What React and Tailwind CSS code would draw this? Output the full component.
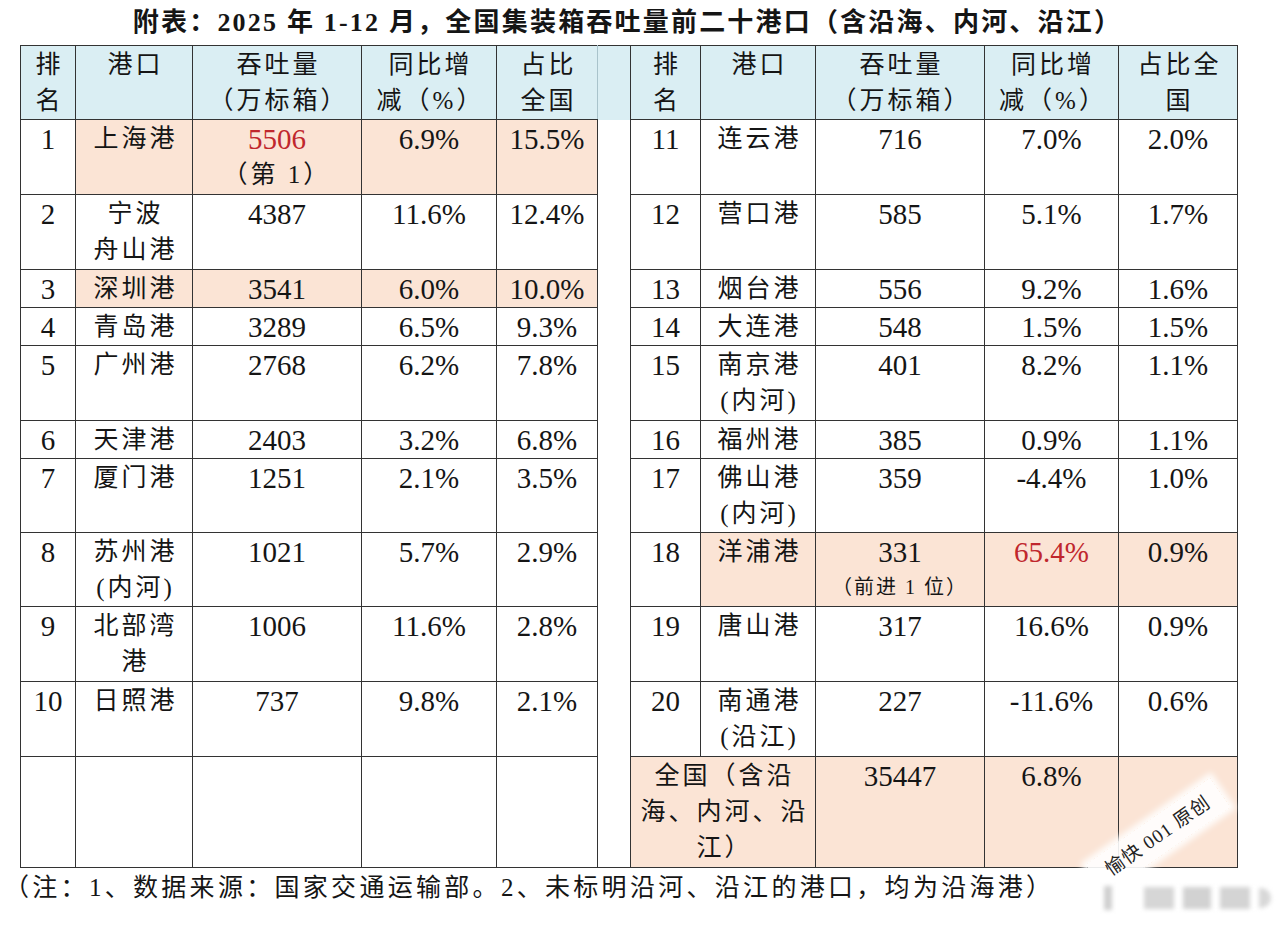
import React from "react";

// 左右两半表格的数据
const leftRows = [
  { r: "1", p: ["上海港"], v: "5506", sub: "（第 1）", y: "6.9%", s: "15.5%", hl: true, redV: true, h: "h-[75px]" },
  { r: "2", p: ["宁波", "舟山港"], v: "4387", y: "11.6%", s: "12.4%", h: "h-[75px]" },
  { r: "3", p: ["深圳港"], v: "3541", y: "6.0%", s: "10.0%", hl: true, h: "h-[38px]" },
  { r: "4", p: ["青岛港"], v: "3289", y: "6.5%", s: "9.3%", h: "h-[38px]" },
  { r: "5", p: ["广州港"], v: "2768", y: "6.2%", s: "7.8%", h: "h-[75px]" },
  { r: "6", p: ["天津港"], v: "2403", y: "3.2%", s: "6.8%", h: "h-[38px]" },
  { r: "7", p: ["厦门港"], v: "1251", y: "2.1%", s: "3.5%", h: "h-[74px]" },
  { r: "8", p: ["苏州港", "(内河)"], v: "1021", y: "5.7%", s: "2.9%", h: "h-[74px]" },
  { r: "9", p: ["北部湾", "港"], v: "1006", y: "11.6%", s: "2.8%", h: "h-[75px]" },
  { r: "10", p: ["日照港"], v: "737", y: "9.8%", s: "2.1%", h: "h-[75px]" },
];

const rightRows = [
  { r: "11", p: ["连云港"], v: "716", y: "7.0%", s: "2.0%" },
  { r: "12", p: ["营口港"], v: "585", y: "5.1%", s: "1.7%" },
  { r: "13", p: ["烟台港"], v: "556", y: "9.2%", s: "1.6%" },
  { r: "14", p: ["大连港"], v: "548", y: "1.5%", s: "1.5%" },
  { r: "15", p: ["南京港", "(内河)"], v: "401", y: "8.2%", s: "1.1%" },
  { r: "16", p: ["福州港"], v: "385", y: "0.9%", s: "1.1%" },
  { r: "17", p: ["佛山港", "(内河)"], v: "359", y: "-4.4%", s: "1.0%" },
  { r: "18", p: ["洋浦港"], v: "331", small: "（前进 1 位）", y: "65.4%", s: "0.9%", hl: true, redY: true },
  { r: "19", p: ["唐山港"], v: "317", y: "16.6%", s: "0.9%" },
  { r: "20", p: ["南通港", "(沿江)"], v: "227", y: "-11.6%", s: "0.6%" },
];

const B = "border border-[#333]";
const HL = "bg-[#fbe4d5]";
const HEAD = "bg-[#daeef3]";
const NUM = "text-[29px]";

function Cell({ children, hl, className = "", colSpan }) {
  return (
    <td colSpan={colSpan} className={`${B} align-top text-center p-0 pt-[1px] ${hl ? HL : ""} ${className}`}>
      {children}
    </td>
  );
}

function Lines({ lines }) {
  return (
    <div className="tracking-[3px] pl-[3px]">
      {lines.map((l, i) => (
        <div key={i}>{l}</div>
      ))}
    </div>
  );
}

function HeadRow() {
  const cjk = "tracking-[3px] pl-[3px] pt-[1px]";
  return (
    <tr className="h-[73px]">
      <td className={`${B} ${HEAD} align-top text-center p-0 ${cjk}`}>排<br />名</td>
      <td className={`${B} ${HEAD} align-top text-center p-0 ${cjk}`}>港口</td>
      <td className={`${B} ${HEAD} align-top text-center p-0 ${cjk}`}>吞吐量<br />（万标箱）</td>
      <td className={`${B} ${HEAD} align-top text-center p-0 ${cjk}`}>同比增<br />减（%）</td>
      <td className={`${B} border-r-[#a9c3cb] ${HEAD} align-top text-center p-0 ${cjk}`}>占比<br />全国</td>
      <td className={`border-t border-r border-[#333] ${HEAD} p-0`}></td>
      <td className={`${B} ${HEAD} align-top text-center p-0 ${cjk}`}>排<br />名</td>
      <td className={`${B} ${HEAD} align-top text-center p-0 ${cjk}`}>港口</td>
      <td className={`${B} ${HEAD} align-top text-center p-0 ${cjk}`}>吞吐量<br />（万标箱）</td>
      <td className={`${B} ${HEAD} align-top text-center p-0 ${cjk}`}>同比增<br />减（%）</td>
      <td className={`${B} ${HEAD} align-top text-center p-0 ${cjk}`}>占比全<br />国</td>
    </tr>
  );
}

export default function App() {
  return (
    <div className="relative w-[1280px] h-[926px] bg-white overflow-hidden text-[#151515] font-['Liberation_Serif','Noto_Sans_CJK_SC',serif]">
      <div className="w-[1257px] text-center font-bold text-[26px] leading-[44px] pt-[1px] tracking-[2.2px] pr-[2px]">
        附表：2025 年 1-12 月，全国集装箱吞吐量前二十港口（含沿海、内河、沿江）
      </div>

      <table className="ml-[20px] table-fixed border-collapse text-[25px] leading-[36px] w-[1117px]">
        <colgroup>
          <col className="w-[55px]" />
          <col className="w-[117px]" />
          <col className="w-[169px]" />
          <col className="w-[135px]" />
          <col className="w-[101px]" />
          <col className="w-[33px]" />
          <col className="w-[70px]" />
          <col className="w-[115px]" />
          <col className="w-[169px]" />
          <col className="w-[134px]" />
          <col className="w-[119px]" />
        </colgroup>
        <tbody>
          <HeadRow />
          {leftRows.map((a, i) => {
            const b = rightRows[i];
            return (
              <tr key={a.r} className={a.h}>
                <Cell className={NUM}>{a.r}</Cell>
                <Cell hl={a.hl}><Lines lines={a.p} /></Cell>
                <Cell hl={a.hl} className={NUM}>
                  <div className={a.redV ? "text-[#c0272d]" : ""}>{a.v}</div>
                  {a.sub && <div className="text-[25px] tracking-[3px]">{a.sub}</div>}
                </Cell>
                <Cell hl={a.hl} className={NUM}>{a.y}</Cell>
                <Cell hl={a.hl} className={NUM}>{a.s}</Cell>
                <td className="border-x border-[#333] p-0"></td>
                <Cell className={NUM}>{b.r}</Cell>
                <Cell hl={b.hl}><Lines lines={b.p} /></Cell>
                <Cell hl={b.hl} className={NUM}>
                  <div>{b.v}</div>
                  {b.small && <div className="text-[20px] leading-[34px] tracking-[2px]">{b.small}</div>}
                </Cell>
                <Cell hl={b.hl} className={NUM}>
                  <span className={b.redY ? "text-[#c0272d]" : ""}>{b.y}</span>
                </Cell>
                <Cell hl={b.hl} className={NUM}>{b.s}</Cell>
              </tr>
            );
          })}
          <tr className="h-[111px]">
            <Cell></Cell>
            <Cell></Cell>
            <Cell></Cell>
            <Cell></Cell>
            <Cell></Cell>
            <td className="border-x border-b border-[#333] p-0"></td>
            <Cell hl colSpan={2}>
              <div className="tracking-[3px] pl-[3px]">
                全国（含沿<br />海、内河、沿<br />江）
              </div>
            </Cell>
            <Cell hl className={NUM}>35447</Cell>
            <Cell hl className={NUM}>6.8%</Cell>
            <Cell hl></Cell>
          </tr>
        </tbody>
      </table>

      <div className="ml-[4px] mt-[2px] text-[25px] leading-[36px] tracking-[3.3px]">
        （注：1、数据来源：国家交通运输部。2、未标明沿河、沿江的港口，均为沿海港）
      </div>

      {/* 水印 */}
      <div className="absolute left-[1082px] top-[818px] w-[152px] h-[36px] -rotate-[35deg] bg-white/90 flex items-center justify-center text-[19px] tracking-[1px] text-[#222] shadow-[0_0_6px_4px_rgba(255,255,255,0.9)]">
        愉快 001 原创
      </div>
      <div className="absolute left-[1104px] top-[886px] flex items-center gap-[9px] blur-[2px]">
        <div className="w-[8px] h-[24px] bg-[#cfcfcf]" />
        <div className="w-[14px] h-[22px] bg-transparent" />
        <div className="w-[30px] h-[22px] bg-[#d6d6d6]" />
        <div className="w-[28px] h-[22px] bg-[#d2d2d2]" />
        <div className="w-[30px] h-[22px] bg-[#d4d4d4]" />
        <div className="w-[12px] h-[20px] rounded-r-full bg-[#d8d8d8]" />
      </div>
    </div>
  );
}
